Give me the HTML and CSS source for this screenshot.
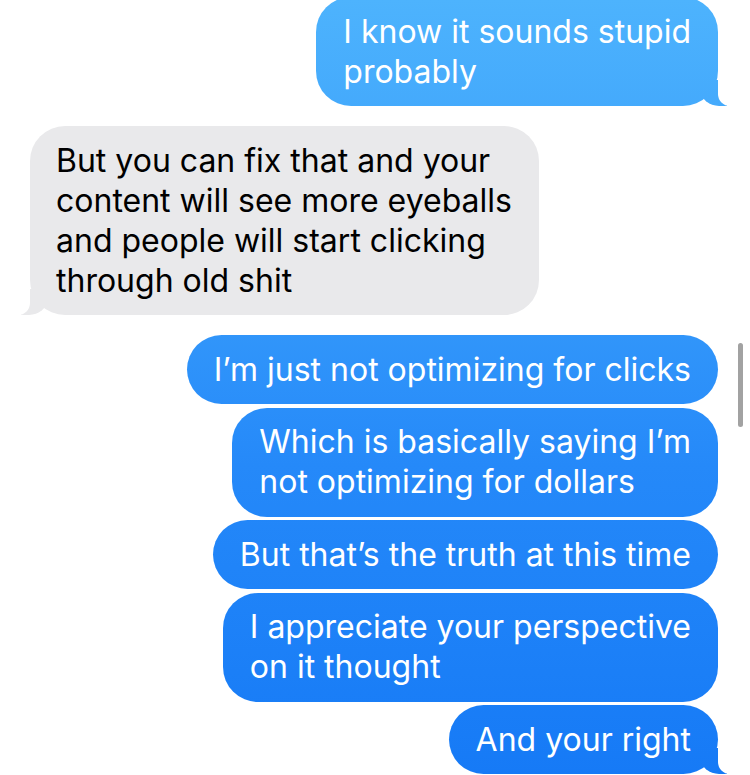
FILE: index.html
```html
<!DOCTYPE html>
<html lang="en">

<head>
    <meta charset="UTF-8">
    <meta name="viewport" content="width=device-width, initial-scale=1.0">
    <title>Beskeder</title>
    <link rel="stylesheet" href="styles.css">
</head>

<body>
    <main class="chat">
        <div class="msg sent tail">I know it sounds stupid<br>probably</div>

        <div class="msg got tail">But you can fix that and your<br>content will see more eyeballs<br>and people will start clicking<br>through old shit</div>

        <div class="group">
            <div class="msg sent">I’m just not optimizing for clicks</div>
            <div class="msg sent">Which is basically saying I’m<br>not optimizing for dollars</div>
            <div class="msg sent">But that’s the truth at this time</div>
            <div class="msg sent">I appreciate your perspective<br>on it thought</div>
            <div class="msg sent tail">And your right</div>
        </div>
    </main>
    <div class="scrollbar"></div>
</body></html>
```

FILE: styles.css
```css
html,
body {
    margin: 0;
    height: 100%;
    overflow: hidden;
    background-color: #FFF;
}

body {
    font-family: Inter, "Noto Sans", sans-serif;
    font-size: 32px;
    line-height: 40px;
}

.chat {
    display: flex;
    flex-direction: column;
    gap: 20px;
    margin-top: -3px;
    padding: 0 32px 0 30px;
}

.group {
    display: flex;
    flex-direction: column;
    align-items: flex-end;
    gap: 3.5px;
}

.msg {
    position: relative;
    width: fit-content;
    padding: 14.5px 27px;
    border-radius: 35px;
    white-space: nowrap;
}

.sent {
    align-self: flex-end;
    color: #FFF;
    background: linear-gradient(#4db3fd, #3a9ffb 30%, #2589f9 60%, #167af6) fixed;
}

.got {
    align-self: flex-start;
    padding-left: 26px;
    color: #000;
    background-color: #e9e9eb;
}

/* haler */
.tail::before,
.tail::after {
    content: "";
    position: absolute;
    bottom: 0;
    height: 26px;
}

.sent.tail::before {
    right: -9px;
    width: 26px;
    background: inherit;
    border-bottom-left-radius: 18px 15px;
}

.sent.tail::after {
    right: -30px;
    width: 30px;
    background-color: #FFF;
    border-bottom-left-radius: 12px;
}

.got.tail::before {
    left: -9px;
    width: 26px;
    background-color: #e9e9eb;
    border-bottom-right-radius: 18px 15px;
}

.got.tail::after {
    left: -30px;
    width: 30px;
    background-color: #FFF;
    border-bottom-right-radius: 12px;
}

.scrollbar {
    position: fixed;
    top: 343px;
    left: 738px;
    width: 5px;
    height: 84px;
    border-radius: 3px;
    background-color: #a2a2a2;
}
```
